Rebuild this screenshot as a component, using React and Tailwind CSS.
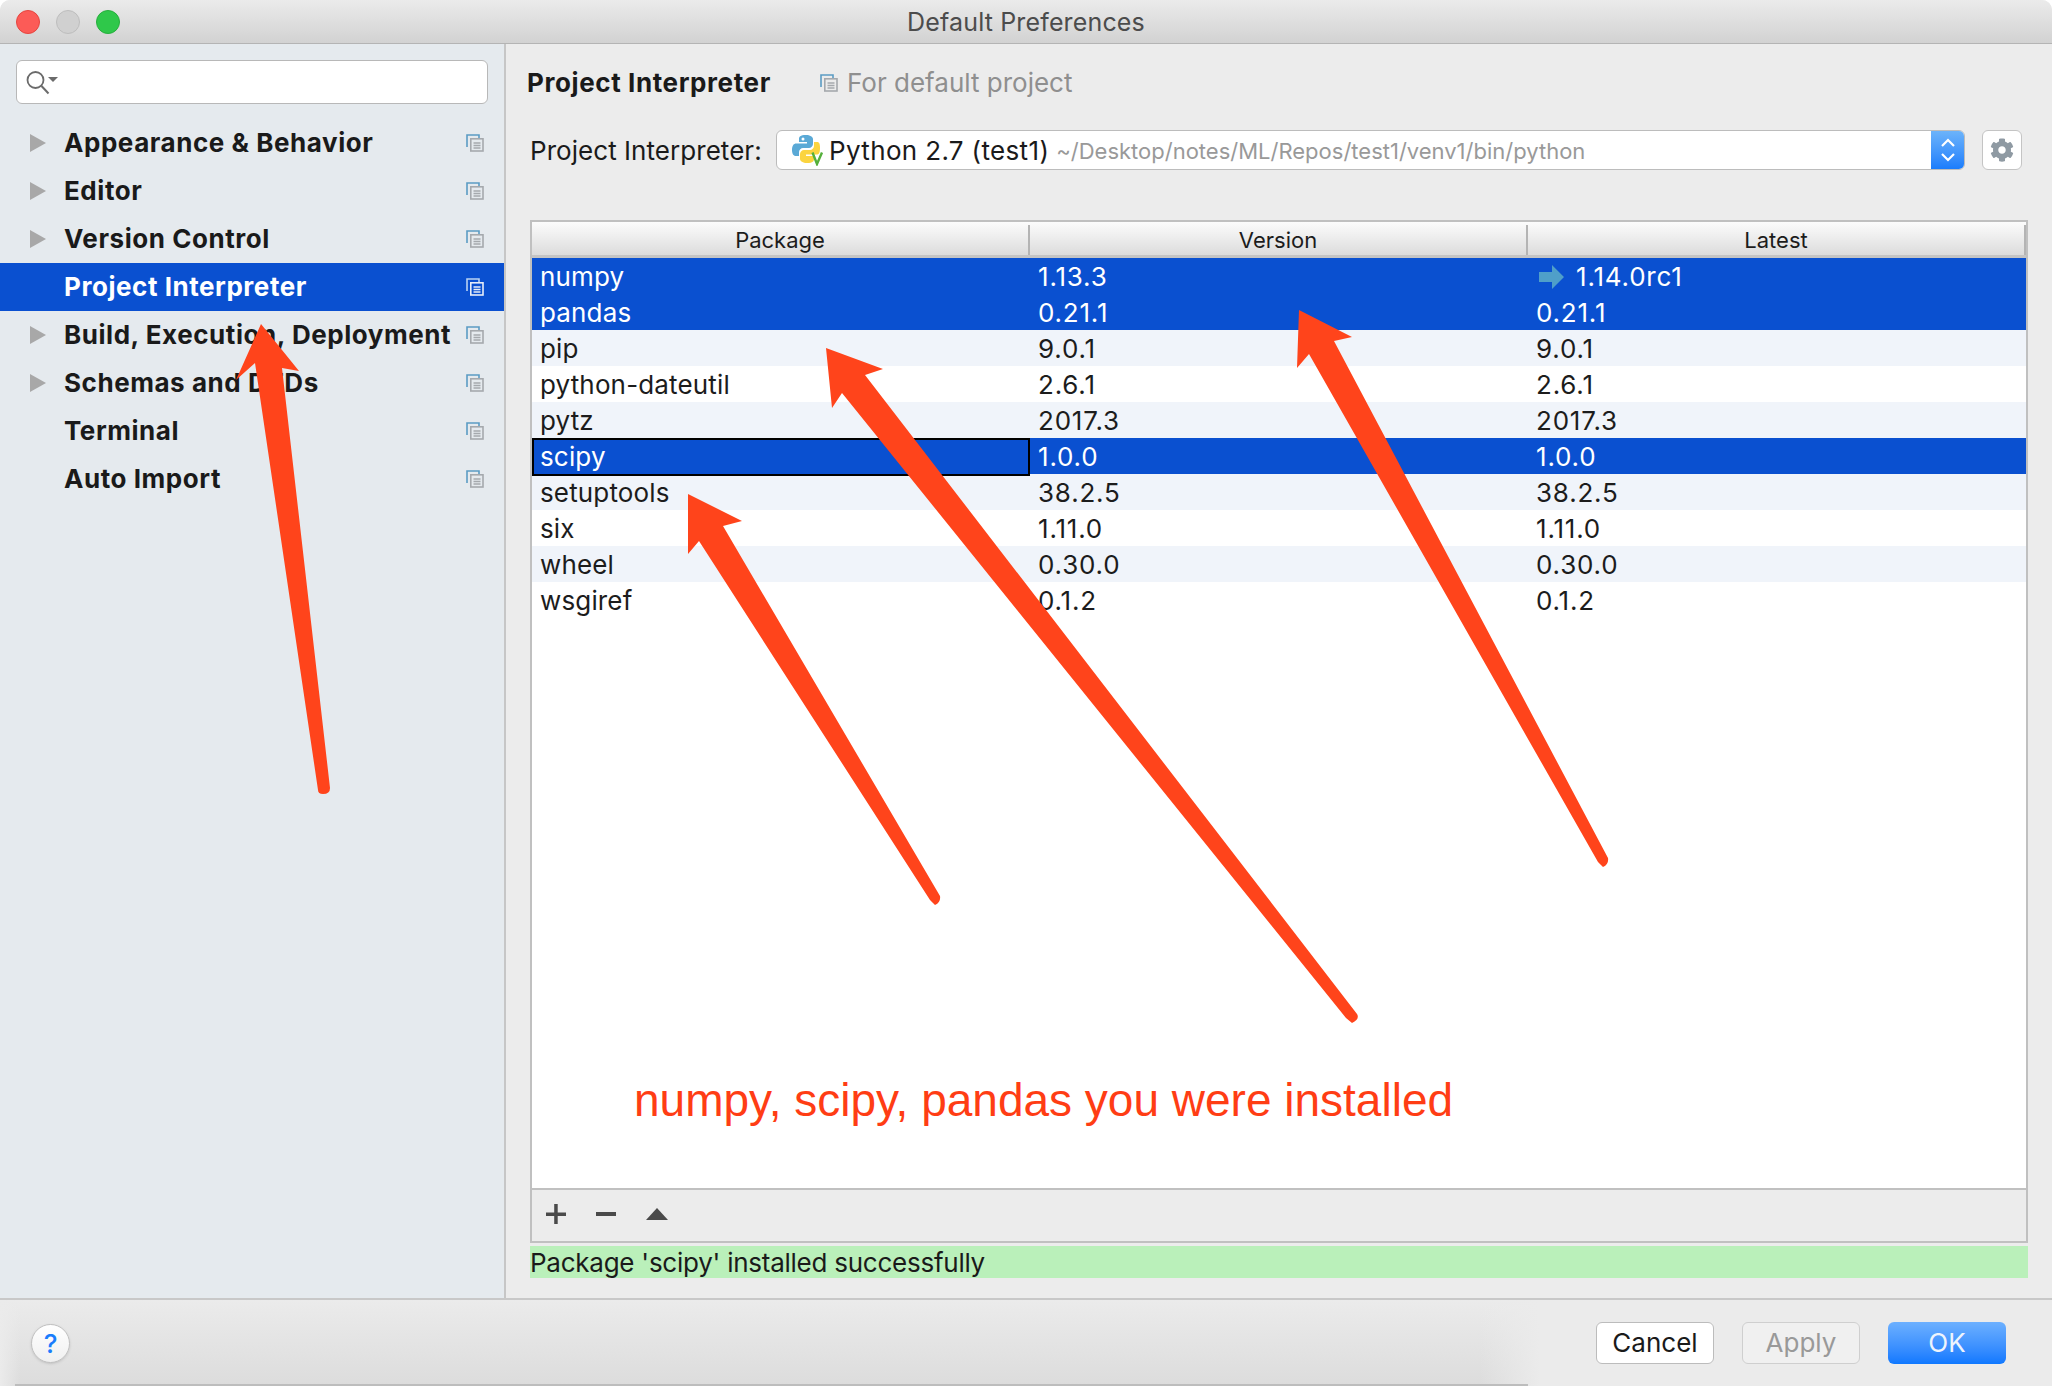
import { FaCog } from "react-icons/fa"

const sidebarItems = [
  { label: "Appearance & Behavior", arrow: true },
  { label: "Editor", arrow: true },
  { label: "Version Control", arrow: true },
  { label: "Project Interpreter", arrow: false, active: true },
  { label: "Build, Execution, Deployment", arrow: true },
  { label: "Schemas and DTDs", arrow: true },
  { label: "Terminal", arrow: false },
  { label: "Auto Import", arrow: false },
]

const packages = [
  { name: "numpy", version: "1.13.3", latest: "1.14.0rc1", selected: true, update: true },
  { name: "pandas", version: "0.21.1", latest: "0.21.1", selected: true },
  { name: "pip", version: "9.0.1", latest: "9.0.1" },
  { name: "python-dateutil", version: "2.6.1", latest: "2.6.1" },
  { name: "pytz", version: "2017.3", latest: "2017.3" },
  { name: "scipy", version: "1.0.0", latest: "1.0.0", selected: true, focused: true },
  { name: "setuptools", version: "38.2.5", latest: "38.2.5" },
  { name: "six", version: "1.11.0", latest: "1.11.0" },
  { name: "wheel", version: "0.30.0", latest: "0.30.0" },
  { name: "wsgiref", version: "0.1.2", latest: "0.1.2" },
]

const CopyIcon = ({ light }) => (
  <svg width="18" height="18" viewBox="0 0 18 18" fill="none" className="shrink-0">
    <path d="M1 13V1h12v3" stroke={light ? "#b9d2f2" : "#5b9cc4"} strokeWidth="1.6" />
    <rect x="4.8" y="4.8" width="12.2" height="12.2" stroke={light ? "#e6edf8" : "#a5a9ad"} strokeWidth="1.6" />
    <path d="M7.5 9h7M7.5 11.5h7M7.5 14h7" stroke={light ? "#e6edf8" : "#a5a9ad"} strokeWidth="1.3" />
  </svg>
)

const PythonIcon = () => (
  <svg width="32" height="32" viewBox="0 0 32 32" className="shrink-0">
    <path d="M14 1c-6 0-7 2-7 4v3h8v1.500H4c-2 0-4 2-4 6.500s2 6 4 6h3v-4c0-2 2-4 4-4h6c2 0 4-2 4-4V5c0-2-3-4-7-4z" fill="#5aa9d6" />
    <path d="M15 29c6 0 7-2 7-4v-3h-8v-1.500h11c2 0 3-2 3-6.500s-1-6-3-6h-3v4c0 2-2 4-4 4h-6c-2 0-4 2-4 4v5c0 2 3 4 7 4z" fill="#fbd43f" />
    <circle cx="11" cy="5" r="1.500" fill="#fff" />
    <path d="M20.500 18.500l4.500 11.500 5-11.500" fill="none" stroke="#55b03c" strokeWidth="2.400" />
  </svg>
)

const HeaderCell = ({ children }) => (
  <div className="flex items-center">
    <div className="flex-1 pt-[2px] text-center text-[22px] text-[#1c1c1c]">{children}</div>
    <div className="w-[2px] h-[30px] bg-[#b4b4b4]" />
  </div>
)

const Row = ({ pkg, index }) => {
  const bg = pkg.selected ? "bg-[#0a50d0] text-white" : index % 2 === 0 ? "bg-[#f0f4fa] text-[#1c1c1c]" : "bg-white text-[#1c1c1c]"
  return (
    <div className={`grid grid-cols-[498px_498px_1fr] h-9 text-[26px] leading-[38px] ${bg}`}>
      <div className={`pl-2 tracking-[0.15px] ${pkg.focused ? "border-2 border-black leading-[34px] pl-[6px]" : ""}`}>{pkg.name}</div>
      <div className="pl-2 tracking-[0.8px]">{pkg.version}</div>
      <div className="pl-2 flex items-center tracking-[0.8px]">
        {pkg.update && (
          <svg width="25" height="24" viewBox="0 0 25 24" className="ml-[3px] mr-[12px]">
            <path d="M0 7h13V0l12 12-12 12v-7H0z" fill="#4f9fc9" />
          </svg>
        )}
        {pkg.latest}
      </div>
    </div>
  )
}

export default function App() {
  return (
    <div className="relative w-[2052px] h-[1386px] overflow-hidden bg-white font-['Inter',sans-serif]">
      <div className="flex flex-col h-full rounded-t-[10px] overflow-hidden bg-[#ececec]">

        {/* Title bar */}
        <div className="grid grid-cols-[1fr_auto_1fr] items-center h-[44px] shrink-0 bg-gradient-to-b from-[#ebebeb] to-[#d2d2d2] border-b border-[#b4b4b4]">
          <div className="flex gap-4 pl-4">
            <div className="w-6 h-6 rounded-full bg-[#fc5b57] border border-[#e5453f]" />
            <div className="w-6 h-6 rounded-full bg-[#d0d0d0] border border-[#bdbdbd]" />
            <div className="w-6 h-6 rounded-full bg-[#2fc84a] border border-[#27ae3d]" />
          </div>
          <div className="pt-[3px] text-[25px] tracking-[0.15px] text-[#4c4c4c]">Default Preferences</div>
          <div />
        </div>

        <div className="flex flex-1 min-h-0">
          {/* Sidebar */}
          <div className="w-[506px] shrink-0 bg-[#e5eaee] border-r-2 border-[#c6c6c6]">
            <div className="mt-4 ml-4 w-[472px] h-[44px] flex items-center pl-[9px] pt-[2px] bg-white border border-[#b8b8b8] rounded-[6px]">
              <svg width="32" height="26" viewBox="0 0 32 26" fill="none">
                <circle cx="9.500" cy="10" r="8" stroke="#6b6b6b" strokeWidth="1.800" />
                <path d="M15.500 16l7 7.500" stroke="#6b6b6b" strokeWidth="2" />
                <path d="M22 7h10l-5 5z" fill="#6b6b6b" />
              </svg>
            </div>
            <div className="mt-[15px]">
              {sidebarItems.map((item) => (
                <div key={item.label} className={`flex items-center h-12 pr-[20px] ${item.active ? "bg-[#0a50d0] text-white" : "text-[#1a1a1a]"}`}>
                  <div className="w-[64px] pl-[30px] shrink-0">
                    {item.arrow && (
                      <svg width="16" height="18" viewBox="0 0 16 18">
                        <path d="M0 0l16 9-16 9z" fill="#a8a8a8" />
                      </svg>
                    )}
                  </div>
                  <div className="flex-1 pb-[2px] text-[26px] font-bold tracking-[0.55px] whitespace-nowrap">{item.label}</div>
                  <CopyIcon light={item.active} />
                </div>
              ))}
            </div>
          </div>

          {/* Main panel */}
          <div className="flex-1 min-w-0 flex flex-col pl-[24px] pr-[24px]">
            <div className="flex items-center h-[32px] mt-[23px] -ml-[3px]">
              <div className="pb-[1px] text-[26px] font-bold tracking-[0.6px] text-[#1a1a1a] w-[293px] whitespace-nowrap">Project Interpreter</div>
              <CopyIcon />
              <div className="pb-[1px] text-[26px] text-[#8f8f8f] ml-[9px]">For default project</div>
            </div>

            <div className="flex items-center h-[40px] mt-[31px] mr-[6px]">
              <div className="w-[246px] shrink-0 text-[26px] tracking-[0.05px] text-[#1a1a1a] whitespace-nowrap">Project Interpreter:</div>
              <div className="flex-1 h-full flex items-center bg-white border border-[#bcbcbc] rounded-[6px] overflow-hidden">
                <div className="flex flex-1 items-center pl-[15px] min-w-0">
                  <PythonIcon />
                  <span className="ml-[5px] text-[26px] tracking-[0.35px] text-[#1a1a1a] whitespace-nowrap">Python 2.7 (test1)</span>
                  <span className="ml-[7px] pt-[2px] text-[22px] text-[#999999] whitespace-nowrap">~/Desktop/notes/ML/Repos/test1/venv1/bin/python</span>
                </div>
                <div className="w-[33px] h-full flex items-center justify-center bg-gradient-to-b from-[#6cb3fa] to-[#1a7dfc]">
                  <svg width="16" height="28" viewBox="0 0 16 28" fill="none" stroke="#fff" strokeWidth="2.200">
                    <path d="M2 10l6-6 6 6M2 18l6 6 6-6" />
                  </svg>
                </div>
              </div>
              <div className="ml-[17px] w-[40px] h-full flex items-center justify-center bg-white border border-[#c4c4c4] rounded-[6px]">
                <FaCog size={24} color="#8f9aa3" />
              </div>
            </div>

            {/* Package table */}
            <div className="mt-[50px] h-[1023px] flex flex-col border-2 border-[#c0c0c0] bg-white">
              <div className="grid grid-cols-[498px_498px_1fr] h-[36px] shrink-0 bg-gradient-to-b from-[#fcfcfc] to-[#dcdcdc] border-b-[3px] border-[#c4c4c4]">
                <HeaderCell>Package</HeaderCell>
                <HeaderCell>Version</HeaderCell>
                <HeaderCell>Latest</HeaderCell>
              </div>
              <div className="flex-1">
                {packages.map((pkg, i) => (
                  <Row key={pkg.name} pkg={pkg} index={i} />
                ))}
              </div>
              <div className="flex items-center h-[53px] shrink-0 pl-[14px] pb-[3px] gap-[30px] bg-[#ececec] border-t-2 border-[#c0c0c0]">
                <svg width="20" height="20" viewBox="0 0 20 20">
                  <path d="M0 8.500h20v3.500H0zM8.200 0h3.500v20H8.200z" fill="#4a4a4a" />
                </svg>
                <svg width="20" height="20" viewBox="0 0 20 20">
                  <path d="M0 8h20v4H0z" fill="#4a4a4a" />
                </svg>
                <svg width="22" height="12" viewBox="0 0 22 12">
                  <path d="M11 0l11 12H0z" fill="#4a4a4a" />
                </svg>
              </div>
            </div>

            <div className="mt-[3px] h-[32px] shrink-0 bg-[#baf0ba] text-[26px] leading-[34px] tracking-[-0.25px] text-[#1a1a1a] whitespace-nowrap">
              Package 'scipy' installed successfully
            </div>
          </div>
        </div>

        {/* Footer */}
        <div className="relative flex items-center h-[88px] shrink-0 border-t-2 border-[#c8c8c8] pl-[31px] pr-[46px] bg-[linear-gradient(to_right,#ebebeb,transparent_20px,transparent_1480px,#ebebeb_1540px),linear-gradient(to_bottom,#ebebeb,#dcdcdc)]">
          <div className="w-[39px] h-[39px] rounded-full flex items-center justify-center bg-gradient-to-b from-white to-[#f0f0f0] border border-[#c0c0c0] shadow-sm text-[26px] font-medium text-[#1a7dfc]">?</div>
          <div className="ml-auto flex gap-[28px]">
            <div className="w-[118px] h-[42px] pb-[1px] flex items-center justify-center bg-white border border-[#bcbcbc] rounded-[6px] text-[26px] text-[#1a1a1a]">Cancel</div>
            <div className="w-[118px] h-[42px] pb-[1px] flex items-center justify-center bg-[#f0f0f0] border border-[#cfcfcf] rounded-[6px] text-[26px] text-[#999999]">Apply</div>
            <div className="w-[118px] h-[42px] pb-[1px] flex items-center justify-center bg-gradient-to-b from-[#6cb0ff] to-[#0d78ff] rounded-[6px] text-[26px] text-[#eef4fc]">OK</div>
          </div>
          <div className="absolute bottom-0 left-[15px] w-[1513px] h-[2px] bg-[#bdbdbd]" />
        </div>
      </div>

      {/* Red annotations drawn over the screenshot */}
      <svg width="2052" height="1386" viewBox="0 0 2052 1386" className="absolute inset-0 pointer-events-none">
        <g fill="#ff441b">
          <path d="M261 324L299 371L282 368L330 788Q330 794 323 794Q318 794 318 790L255 363L236 380Z" />
          <path d="M826 348L883 369L865 375L1357 1014Q1360 1019 1352 1023L1346 1018L842 393L832 408Z" />
          <path d="M1299 310L1352 337L1334 341L1608 858Q1609 864 1603 867L1598 862L1309 354L1297 368Z" />
          <path d="M688 494L742 521L723 526L940 896Q941 902 935 905L930 900L699 541L688 554Z" />
        </g>
      </svg>
      <div className="absolute left-[634px] top-[1074px] font-['Liberation_Sans',sans-serif] text-[46px] leading-[52px] text-[#ff3d14] whitespace-nowrap">
        numpy, scipy, pandas you were installed
      </div>
    </div>
  )
}
